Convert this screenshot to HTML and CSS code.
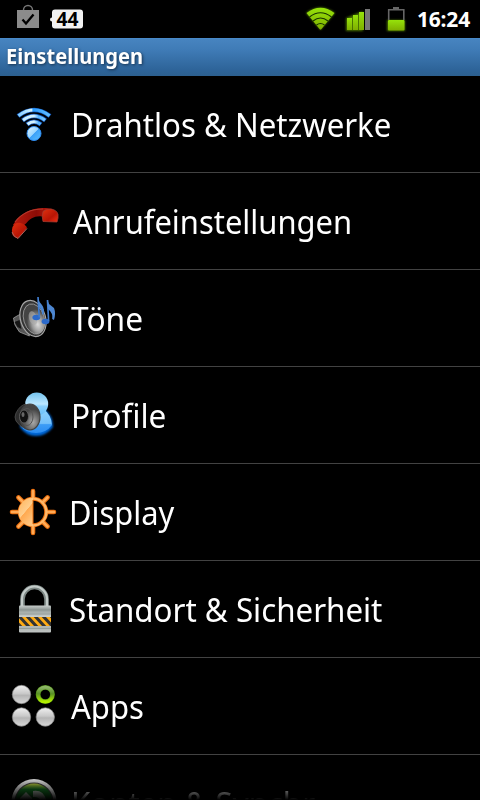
FILE: index.html
```
<!DOCTYPE html>
<html lang="de">
<head>
<meta charset="utf-8">
<title>Einstellungen</title>
<link rel="stylesheet" href="styles.css">
</head>
<body>
<div class="screen">
  <header class="status">
    <svg class="status-left" width="90" height="38" viewBox="0 0 90 38">
      <path d="M23.500 11V10a4.500 4.500 0 0 1 9 0v1" fill="none" stroke="#777" stroke-width="1.400"/>
      <path d="M17 10h22v18H17z" fill="#8b8b8b"/>
      <path d="M22.500 19.500l3.500 4 7.500-9" fill="none" stroke="#000" stroke-width="2.300"/>
      <path d="M55 9.500h25q3 0 3 3v13q0 3-3 3H55q-3 0-3-3v-4q-2 0-2-2t2-2v-5q0-3 3-3z" fill="#f2f2f2"/>
      <text class="count" x="56.500" y="26" textLength="22" lengthAdjust="spacingAndGlyphs">44</text>
    </svg>
    <svg class="status-right" width="114" height="38" viewBox="300 0 114 38">
      <defs>
        <linearGradient id="lime" x1="0" y1="0" x2="0" y2="1"><stop offset="0" stop-color="#96e20b"/><stop offset="1" stop-color="#7faf00"/></linearGradient>
        <filter id="glow" x="-30%" y="-30%" width="160%" height="160%"><feGaussianBlur stdDeviation="1.300"/></filter>
      </defs>
      <g fill="#5d9200" filter="url(#glow)" opacity=".8"><path d="M306 13q14.500-11 29 0l-14.500 17z"/><path d="M346 18l17-7v20h-17zM387 20h18v11h-18z"/></g>
      <path d="M306.500 13q14-10.500 28 0L321 29.500h-1z" fill="url(#lime)"/>
      <g fill="none" stroke="#163300" stroke-width="1.100"><path d="M309.500 17q11-8.500 22 0M313 21q7.500-6 15 0M316.500 25q4-3 8 0"/></g>
      <g fill="url(#lime)"><rect x="347" y="18" width="5" height="12"/><rect x="353" y="15" width="5" height="15"/><rect x="359" y="12" width="5" height="18"/></g>
      <rect x="365" y="9" width="5" height="21" fill="#777"/>
      <path d="M393 7h6v2.500h-6z" fill="#666"/>
      <path d="M388.700 20v-10.200h15.100V20" fill="none" stroke="#666" stroke-width="1.600"/>
      <rect x="388" y="20" width="16.500" height="10.500" rx="1" fill="url(#lime)"/>
    </svg>
    <span class="clock">16:24</span>
  </header>
  <h1 class="title"><span>Einstellungen</span></h1>
  <ul class="list">
    <li class="row">
      <svg class="icon" viewBox="0 0 68 96">
        <defs><linearGradient id="wave"><stop offset="0" stop-color="#7fcaff"/><stop offset=".42" stop-color="#d5f3ff"/><stop offset=".47" stop-color="#2b9cff"/><stop offset="1" stop-color="#62beff"/></linearGradient>
        <linearGradient id="wave2"><stop offset="0" stop-color="#c5ebff"/><stop offset=".5" stop-color="#d8f4ff"/><stop offset=".7" stop-color="#58b4ff"/><stop offset="1" stop-color="#7ccaff"/></linearGradient>
        <linearGradient id="dot" x1="0" y1="0" x2="1" y2="1"><stop offset="0" stop-color="#e4f7ff"/><stop offset=".48" stop-color="#9bd6ff"/><stop offset=".5" stop-color="#3ba0f8"/><stop offset="1" stop-color="#5cc0ff"/></linearGradient></defs>
        <g fill="none" stroke="#1255b5" stroke-width="4.600"><path d="M18 40q16-12 32 0M22.500 44.500q11.500-9 23 0M27 48.500q7-5.500 14 0"/></g>
        <path d="M18.500 39.700q15.500-11.500 31 0" fill="none" stroke="url(#wave)" stroke-width="3.200"/>
        <path d="M23 44.200q11-8.500 22 0M27.500 48.200q6.500-5 13 0" fill="none" stroke="url(#wave2)" stroke-width="3"/>
        <circle cx="34" cy="57.500" r="7" fill="url(#dot)" stroke="#2f8cf0"/>
      </svg>
      <span class="label w1">Drahtlos &amp; Netzwerke</span>
    </li>
    <li class="row">
      <svg class="icon" viewBox="0 0 68 96">
        <defs><linearGradient id="red" x1="0" y1="0" x2="1" y2="1"><stop offset="0" stop-color="#e03210"/><stop offset=".6" stop-color="#b81505"/><stop offset="1" stop-color="#f03015"/></linearGradient>
        <linearGradient id="handle"><stop offset="0" stop-color="#b81a0d"/><stop offset=".6" stop-color="#8c0c06"/><stop offset="1" stop-color="#c01d10"/></linearGradient></defs>
        <path d="M13 52C19 41 31 34 46 35l6 1v9l-10-1.500c-7-1-12 2-16 7l-4 3z" fill="url(#handle)"/>
        <path d="M15 49q10-13 28-13" fill="none" stroke="#b5382c" stroke-width="1.200"/>
        <path d="M43 38.500q3-3 8-2.500 6 1 7 5.500.5 3.500-1 7.500L43 48.500q-1.500-5 0-10z" fill="url(#red)" stroke="#a53a2f" stroke-width=".8"/>
        <path d="M12.500 54q3-5 8-4 5 1 6.500 5l-9 10.500q-5-1-6-5-.5-3 .5-6.500z" fill="url(#red)"/>
        <path d="M12 59q1.500 5 6 6.500l9-10" fill="none" stroke="#a8665f" stroke-width="1"/>
      </svg>
      <span class="label w2">Anrufeinstellungen</span>
    </li>
    <li class="row">
      <svg class="icon" viewBox="0 0 68 96">
        <defs><radialGradient id="cone" cx=".6" cy=".7"><stop offset="0" stop-color="#ddd"/><stop offset=".55" stop-color="#999"/><stop offset="1" stop-color="#444"/></radialGradient></defs>
        <path d="M13.500 48l7-4 9 22-10-4q-6-7-6-14z" fill="#555" stroke="#aaa" stroke-width=".7"/>
        <path d="M14.500 52l5-2 2 9-4-2z" fill="#151515"/>
        <ellipse cx="33" cy="48.500" rx="12.500" ry="18.500" transform="rotate(-17 33 48.500)" fill="#333" stroke="#a5a5a5" stroke-width="1.200"/>
        <ellipse cx="34" cy="49" rx="10.300" ry="15.500" transform="rotate(-17 34 49)" fill="url(#cone)" stroke="#aaa" stroke-width=".7"/>
        <ellipse cx="33" cy="48" rx="4" ry="7" transform="rotate(-17 33 48)" fill="#aaa" opacity=".6"/>
        <g fill="#2c6acb"><ellipse cx="36.300" cy="47.500" rx="3.900" ry="2.700"/><ellipse cx="45.500" cy="51.500" rx="3.900" ry="2.700"/></g>
        <g fill="none" stroke="#3e7bce" stroke-width="1.700"><path d="M39.300 47.500L38 27M48.600 51L47.500 30"/></g>
        <path d="M38 28q1 4 4 7 3 4 1.500 10l-1.500-1q.5-4-3.500-7zM47.500 30l1.500 4 5 4q2 5 0 12l-1.800-1q1-6-4.200-10z" fill="#4d87d2"/>
      </svg>
      <span class="label w3">Töne</span>
    </li>
    <li class="row">
      <svg class="icon" viewBox="0 0 68 96">
        <defs><linearGradient id="man" x1="0" y1="0" x2="0" y2="1"><stop offset="0" stop-color="#74c4ef"/><stop offset=".5" stop-color="#bce7ff"/><stop offset=".6" stop-color="#8bd0fb"/><stop offset="1" stop-color="#69bff8"/></linearGradient>
        <linearGradient id="torso" x1="0" y1="0" x2="0" y2="1"><stop offset="0" stop-color="#8fd3fb"/><stop offset=".6" stop-color="#74c0fa"/><stop offset=".65" stop-color="#3c9cf6"/><stop offset="1" stop-color="#2b8cf2"/></linearGradient>
        <radialGradient id="horn" cx=".65" cy=".7"><stop offset="0" stop-color="#aaa"/><stop offset="1" stop-color="#454545"/></radialGradient>
        <filter id="halo"><feGaussianBlur stdDeviation="1.200"/></filter></defs>
        <path d="M20 60q0-17 24-18 9 6 9 18-7 9-17 9t-16-9z" fill="#0068d8" filter="url(#halo)"/>
        <path d="M20.500 59q1-15 23-17 8 6 8.500 16-6 8-16 8t-15.500-7z" fill="url(#torso)"/>
        <circle cx="36.700" cy="37" r="11.500" fill="url(#man)"/>
        <path d="M16 46q4-8 10-9v25q-7-3-10-8-2-4 0-8z" fill="#2c2c2c" stroke="#555" stroke-width=".7"/>
        <ellipse cx="30" cy="50" rx="10" ry="13" fill="url(#horn)" stroke="#444" stroke-width="1.200"/>
        <ellipse cx="27" cy="50" rx="6" ry="8.500" fill="none" stroke="#555"/>
        <ellipse cx="24" cy="49.500" rx="4.500" ry="6.500" fill="#111" stroke="#666" stroke-width=".8"/>
        <ellipse cx="23" cy="47.500" rx="1.500" ry="2.500" fill="#666"/>
      </svg>
      <span class="label w4">Profile</span>
    </li>
    <li class="row">
      <svg class="icon" viewBox="0 0 68 96">
        <defs><linearGradient id="sun" x1="0" y1="0" x2=".6" y2="1"><stop offset="0" stop-color="#ffb45b"/><stop offset=".55" stop-color="#ffce8c"/><stop offset=".57" stop-color="#ffa94f"/><stop offset="1" stop-color="#ffc47d"/></linearGradient></defs>
        <path d="M33 27v7M33 62v7M12 48h7M47 48h7M18.500 33.500l5 5M42.500 57.500l5 5M18.500 62.500l5-5M42.500 38.500l5-5" fill="none" stroke-linecap="round" stroke="#e96c0b" stroke-width="4.600"/>
        <circle cx="33" cy="48" r="13.200" fill="#000" stroke="#e96c0b" stroke-width="4"/>
        <path d="M33 27v7M33 62v7M12 48h7M47 48h7M18.500 33.500l5 5M42.500 57.500l5 5M18.500 62.500l5-5M42.500 38.500l5-5" fill="none" stroke-linecap="round" stroke="#ffaa55" stroke-width="2.600"/>
        <circle cx="33" cy="48" r="13.400" fill="none" stroke="#ffb868" stroke-width="2.400"/>
        <path d="M33 34a14 14 0 0 0 0 28z" fill="url(#sun)"/><path d="M33 36v24" stroke="#e96c0b"/>
      </svg>
      <span class="label w5">Display</span>
    </li>
    <li class="row">
      <svg class="icon" viewBox="0 0 68 96">
        <defs><linearGradient id="steel" x1="0" y1="0" x2="0" y2="1"><stop offset="0" stop-color="#c7cdcb"/><stop offset=".15" stop-color="#929b98"/><stop offset=".45" stop-color="#d1d6d4"/><stop offset=".8" stop-color="#aeb5b2"/><stop offset="1" stop-color="#c0c5c3"/></linearGradient><clipPath id="band"><path d="M19 56h32v9H19z"/></clipPath></defs>
        <path d="M22.500 46V38a12 12 0 0 1 24 0V46" fill="none" stroke="#7d8885" stroke-width="4.600"/>
        <path d="M22 46V38a12.500 12.500 0 0 1 25 0V46" fill="none" stroke="#c4ccca" stroke-width="2.200"/>
        <rect x="19" y="44.500" width="32" height="27" rx="1" fill="url(#steel)"/>
        <path d="M19 49h32M19 53h32M19 67.500h32" stroke="#8e9894" stroke-width=".8"/>
        <g clip-path="url(#band)"><path d="M19 56h32v9H19z" fill="#333"/><path d="M14 54l12 13M22 54l12 13M30 54l12 13M38 54l12 13M46 54l12 13" stroke="#ffab13" stroke-width="2.800"/></g>
      </svg>
      <span class="label w6">Standort &amp; Sicherheit</span>
    </li>
    <li class="row">
      <svg class="icon" viewBox="0 0 68 96">
        <defs><linearGradient id="ball" x1="0" y1="0" x2="0" y2="1"><stop offset="0" stop-color="#f0f0f0"/><stop offset=".45" stop-color="#c9c9c9"/><stop offset=".55" stop-color="#b5b5b5"/><stop offset="1" stop-color="#d8d8d8"/></linearGradient><linearGradient id="ring" x1="0" y1="0" x2="0" y2="1"><stop offset="0" stop-color="#8cb565"/><stop offset=".45" stop-color="#599126"/><stop offset="1" stop-color="#b4ef00"/></linearGradient></defs>
        <g fill="url(#ball)" stroke="#888" stroke-width=".7"><circle cx="21.500" cy="36.500" r="9.200"/><circle cx="21.500" cy="59" r="9.200"/><circle cx="45.300" cy="59" r="9.200"/></g>
        <circle cx="45.300" cy="36.500" r="7.200" fill="none" stroke="#4c8a10" stroke-width="4.800"/>
        <circle cx="45.300" cy="36.500" r="7.200" fill="none" stroke="url(#ring)" stroke-width="3.800"/>
      </svg>
      <span class="label w7">Apps</span>
    </li>
    <li class="row">
      <svg class="icon" viewBox="0 0 68 96">
        <defs><linearGradient id="green" x1="0" y1="0" x2="0" y2="1"><stop offset="0" stop-color="#d1dc43"/><stop offset=".16" stop-color="#157b25"/><stop offset="1" stop-color="#075212"/></linearGradient></defs>
        <circle cx="34" cy="46.500" r="22.500" fill="#f0f0f0"/><circle cx="34" cy="47" r="19.500" fill="#444"/><circle cx="34" cy="47" r="18.500" fill="url(#green)"/>
        <path d="M33 36q12-2 14 13h-5q-2-8-9-7zM20 43l6-6 6 6v6H20z" fill="#bbc9bb"/>
      </svg>
      <span class="label w8">Konten &amp; Synchr.</span>
    </li>
  </ul>
  <div class="fade"></div>
</div>
</body>
</html>
```
FILE: styles.css
```
* { box-sizing: border-box; }
body { margin: 0; background: #000; }
.screen {
  position: relative;
  width: 480px;
  height: 800px;
  overflow: hidden;
  display: flex;
  flex-direction: column;
  background: #000;
  color: #fff;
  font-family: "Noto Sans", "Open Sans", sans-serif;
}
.status {
  display: flex;
  flex: 0 0 38px;
  height: 38px;
}
.status-right { margin-left: auto; }
.count { font: bold 19.5px "Noto Sans", sans-serif; fill: #000; }
.clock {
  width: 66px;
  padding-left: 3px;
  font-size: 21px;
  font-weight: 700;
  line-height: 39px;
  letter-spacing: -0.2px;
  white-space: nowrap;
}
.title {
  flex: 0 0 38px;
  margin: 0;
  padding-left: 6px;
  background: linear-gradient(#4784c0, #3f7bb6 30%, #2d6398 85%, #2c608f);
  border-top: 1px solid #4889c9;
  font-size: 21.5px;
  font-weight: 700;
  line-height: 34px;
  text-shadow: 1px 1px 3px #17314d;
}
.title span { display: inline-block; transform: scaleX(.936); transform-origin: left; }
.list { margin: 0; padding: 0; list-style: none; }
.row {
  display: flex;
  height: 97px;
  border-bottom: 1px solid #424242;
}
.icon { flex: 0 0 68px; width: 68px; height: 96px; }
.label {
  height: 96px;
  font-size: 33px;
  line-height: 98px;
  white-space: nowrap;
  transform-origin: left;
}
.w1 { margin-left: 2.8px; transform: scaleX(.945); }
.w2 { margin-left: 5px; transform: scaleX(.937); }
.w3 { margin-left: 2.5px; transform: scaleX(.96); }
.w4 { margin-left: 3.4px; transform: scaleX(.955); }
.w5 { margin-left: .8px; transform: scaleX(.935); }
.w6 { margin-left: .6px; transform: scaleX(.948); }
.w7 { margin-left: 3px; transform: scaleX(.94); }
.w8 { margin-left: 3.4px; transform: scaleX(.945); }
.fade {
  position: absolute;
  left: 0;
  right: 0;
  bottom: 0;
  height: 25px;
  background: linear-gradient(transparent, #000);
}
```
